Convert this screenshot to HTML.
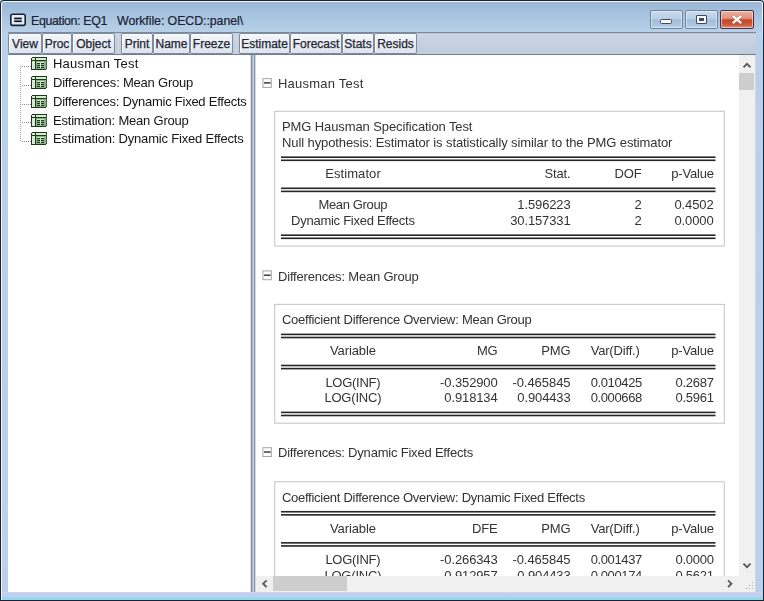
<!DOCTYPE html>
<html><head><meta charset="utf-8">
<style>
*{margin:0;padding:0;box-sizing:border-box}
html,body{width:764px;height:601px;overflow:hidden;background:#c9d6e6}
body{position:relative;font-family:"Liberation Sans",sans-serif;}
.a{position:absolute}
#frame{left:0;top:0;width:764px;height:601px;background:#1c2330;border-radius:4px 4px 0 0}
#frame2{left:1px;top:1px;width:762px;height:599px;border-radius:3px 3px 0 0;background:#f2f7fc}
#frame3{left:2px;top:2px;width:760px;height:598px;border-radius:2px 2px 0 0;
 background:linear-gradient(to bottom,#a4b6c8 0px,#9bb9d6 1px,#a3c0dd 10px,#b3cce5 24px,#b9d0e9 31px,#bcd2ea 100%)}
#lowframe{left:2px;top:560px;width:760px;height:40px;background:linear-gradient(to bottom,#bcd1ea 0,#bccfea 32px,#cfe0ee 32px,#c4cdf0 33px,#c2cff0 36px,#a6d6ee 37px,#8cdaec 40px)}
#title,#title2{top:12px;font-size:12.4px;color:#1a2236;-webkit-text-stroke:0.2px #1a2236;white-space:pre;line-height:18px}
.wb{top:10px;height:19px;border:1px solid #71829a;border-radius:2px;
 background:linear-gradient(to bottom,#c8dbee 0,#b9cfe6 46%,#a3bcd6 52%,#adc6df 80%,#bcd3ea 100%);
 box-shadow:inset 0 0 0 1px rgba(235,244,252,0.6)}
#toolbar{left:8px;top:32px;width:748px;height:23px;background:linear-gradient(to bottom,#a8b6c8 0,#ccd7e5 1px,#c8d3e1 5px,#c1ccda 100%);border-top:1px solid #7a899c;border-bottom:1px solid #6f7d8f}
.btn{position:absolute;top:0px;height:21px;border:1px solid #7f8b9d;border-radius:2px;
 background:linear-gradient(to bottom,#f4f7fb 0,#e9eef6 45%,#dde4ee 100%);font-size:12px;color:#23252e;-webkit-text-stroke:0.25px #23252e;text-align:center;line-height:20px;
 box-shadow:inset 1px 1px 0 #fbfdff}
#client{left:8px;top:55px;width:748px;height:537px;background:#fff}
#split{left:250px;top:55px;width:6px;height:537px;background:linear-gradient(to right,#dde0f2 0,#dde0f2 1px,#8890a8 1px,#8890a8 2px,#aab6ca 2px,#aab6ca 3px,#c2cee0 3px,#c2cee0 4px,#8c9cac 4px,#8c9cac 5px,#cad8e2 5px,#cad8e2 6px)}
#split2{display:none}
.ti{position:absolute;will-change:transform;left:53px;font-size:13px;color:#141414;white-space:pre;line-height:15px}
.ic{position:absolute;left:31px}
.txt{position:absolute;will-change:transform;font-size:13px;color:#333;white-space:pre;line-height:15px}
#vs{left:739px;top:55px;width:16px;height:521px;background:#f0f0f0}
#hs{left:256px;top:576px;width:483px;height:16px;background:#f0f0f0}
#corner{left:739px;top:576px;width:16px;height:16px;background:#f0f0f0}
</style></head><body>
<div id="frame" class="a"></div>
<div id="frame2" class="a"></div>
<div id="frame3" class="a"></div>
<div id="lowframe" class="a"></div>
<div class="a" style="left:762px;top:14px;width:1px;height:586px;background:linear-gradient(to bottom,#f2f7fc 0,#b4d8ea 30px,#a8d8e8 100%)"></div>

<!-- title icon -->
<svg class="a" style="left:9px;top:13px" width="18" height="14" viewBox="0 0 18 14">
 <rect x="1.8" y="1.2" width="14.4" height="11.2" rx="1.8" fill="#e4ecf6" stroke="#18223a" stroke-width="1.6"/>
 <rect x="5.2" y="4.6" width="7.6" height="1.7" fill="#0c1424"/>
 <rect x="5.2" y="7.4" width="7.6" height="1.7" fill="#0c1424"/>
</svg>
<div id="title" class="a" style="left:31px;letter-spacing:-0.35px">Equation: EQ1</div><div id="title2" class="a" style="left:117px;letter-spacing:-0.08px">Workfile: OECD::panel\</div>

<!-- window buttons -->
<div class="a wb" style="left:650px;width:33px"></div>
<div class="a" style="left:660px;top:19px;width:12px;height:5px;background:#fbfcfd;border:1px solid #3e4a5c;border-radius:1.5px"></div>
<div class="a wb" style="left:685px;width:33px"></div>
<div class="a" style="left:696px;top:15px;width:11px;height:9px;background:#fbfcfd;border:1px solid #3e4a5c;border-radius:1px"></div>
<div class="a" style="left:699px;top:18px;width:5px;height:3px;background:#3e4a5c"></div>
<div class="a wb" style="left:720px;width:34px;border-color:#4a2c3a;background:linear-gradient(to bottom,#eab0a0 0,#e49480 40%,#d8775e 48%,#c4442a 52%,#cc5a3e 80%,#e08a70 100%)"></div>
<svg class="a" style="left:729px;top:13px" width="16" height="13" viewBox="0 0 16 13">
 <path d="M4.5 3.5 L11.5 9.5 M11.5 3.5 L4.5 9.5" stroke="#7a3a30" stroke-width="3.6" stroke-linecap="square" opacity="0.3"/>
 <path d="M4.6 3.6 L11.4 9.4 M11.4 3.6 L4.6 9.4" stroke="#fff" stroke-width="2.3" stroke-linecap="square"/>
</svg>

<!-- toolbar -->
<div id="toolbar" class="a">
 <div class="btn" style="left:0px;width:34px">View</div>
 <div class="btn" style="left:34px;width:30px">Proc</div>
 <div class="btn" style="left:64px;width:43px">Object</div>
 <div class="a" style="left:110px;top:0;width:1px;height:21px;background:#d2dae5"></div>
 <div class="btn" style="left:113px;width:32px">Print</div>
 <div class="btn" style="left:145px;width:37px">Name</div>
 <div class="btn" style="left:182px;width:43px">Freeze</div>
 <div class="a" style="left:228px;top:0;width:1px;height:21px;background:#d2dae5"></div>
 <div class="btn" style="left:231px;width:51px">Estimate</div>
 <div class="btn" style="left:282px;width:52px">Forecast</div>
 <div class="btn" style="left:334px;width:32px">Stats</div>
 <div class="btn" style="left:366px;width:43px">Resids</div>
</div>

<div id="client" class="a"></div>
<div id="split" class="a"></div>
<div id="split2" class="a"></div>

<!-- tree -->
<svg class="a" style="left:0;top:0" width="40" height="160" viewBox="0 0 40 160"><g fill="#8c8c8c"><rect x="22" y="66" width="1" height="1"/><rect x="24" y="66" width="1" height="1"/><rect x="26" y="66" width="1" height="1"/><rect x="28" y="66" width="1" height="1"/><rect x="30" y="66" width="1" height="1"/><rect x="22" y="85" width="1" height="1"/><rect x="24" y="85" width="1" height="1"/><rect x="26" y="85" width="1" height="1"/><rect x="28" y="85" width="1" height="1"/><rect x="30" y="85" width="1" height="1"/><rect x="22" y="104" width="1" height="1"/><rect x="24" y="104" width="1" height="1"/><rect x="26" y="104" width="1" height="1"/><rect x="28" y="104" width="1" height="1"/><rect x="30" y="104" width="1" height="1"/><rect x="22" y="122" width="1" height="1"/><rect x="24" y="122" width="1" height="1"/><rect x="26" y="122" width="1" height="1"/><rect x="28" y="122" width="1" height="1"/><rect x="30" y="122" width="1" height="1"/><rect x="22" y="141" width="1" height="1"/><rect x="24" y="141" width="1" height="1"/><rect x="26" y="141" width="1" height="1"/><rect x="28" y="141" width="1" height="1"/><rect x="30" y="141" width="1" height="1"/></g><g fill="#a6a6a6"><rect x="20" y="66" width="1" height="1"/><rect x="20" y="68" width="1" height="1"/><rect x="20" y="70" width="1" height="1"/><rect x="20" y="72" width="1" height="1"/><rect x="20" y="74" width="1" height="1"/><rect x="20" y="76" width="1" height="1"/><rect x="20" y="78" width="1" height="1"/><rect x="20" y="80" width="1" height="1"/><rect x="20" y="82" width="1" height="1"/><rect x="20" y="84" width="1" height="1"/><rect x="20" y="86" width="1" height="1"/><rect x="20" y="88" width="1" height="1"/><rect x="20" y="90" width="1" height="1"/><rect x="20" y="92" width="1" height="1"/><rect x="20" y="94" width="1" height="1"/><rect x="20" y="96" width="1" height="1"/><rect x="20" y="98" width="1" height="1"/><rect x="20" y="100" width="1" height="1"/><rect x="20" y="102" width="1" height="1"/><rect x="20" y="104" width="1" height="1"/><rect x="20" y="106" width="1" height="1"/><rect x="20" y="108" width="1" height="1"/><rect x="20" y="110" width="1" height="1"/><rect x="20" y="112" width="1" height="1"/><rect x="20" y="114" width="1" height="1"/><rect x="20" y="116" width="1" height="1"/><rect x="20" y="118" width="1" height="1"/><rect x="20" y="120" width="1" height="1"/><rect x="20" y="122" width="1" height="1"/><rect x="20" y="124" width="1" height="1"/><rect x="20" y="126" width="1" height="1"/><rect x="20" y="128" width="1" height="1"/><rect x="20" y="130" width="1" height="1"/><rect x="20" y="132" width="1" height="1"/><rect x="20" y="134" width="1" height="1"/><rect x="20" y="136" width="1" height="1"/><rect x="20" y="138" width="1" height="1"/><rect x="20" y="140" width="1" height="1"/></g></svg>
<svg class="a" style="left:31px;top:57px" width="16" height="13" viewBox="0 0 16 13" shape-rendering="crispEdges"><rect x="0" y="0" width="16" height="13" rx="2" fill="#1e381e"/><rect x="1" y="1" width="3" height="11" fill="#d3efcd"/><rect x="5" y="1" width="10" height="2" fill="#d3efcd"/><rect x="5" y="4" width="10" height="8" fill="#8fae8b"/><rect x="15" y="2" width="1" height="9" fill="#4a644a"/><rect x="1" y="3" width="3" height="1" fill="#1e381e"/><g fill="#1f3a1f"><rect x="6" y="6" width="3" height="1"/><rect x="6" y="8" width="3" height="1"/><rect x="6" y="10" width="3" height="1"/><rect x="10" y="6" width="3" height="1"/><rect x="10" y="8" width="3" height="1"/><rect x="10" y="10" width="3" height="1"/></g><g fill="#cfe8ca"><rect x="6" y="5" width="7" height="1"/><rect x="9" y="5" width="1" height="6"/></g></svg>
<div class="ti" style="top:56.10px;letter-spacing:0.220px">Hausman Test</div>
<svg class="a" style="left:31px;top:76px" width="16" height="13" viewBox="0 0 16 13" shape-rendering="crispEdges"><rect x="0" y="0" width="16" height="13" rx="2" fill="#1e381e"/><rect x="1" y="1" width="3" height="11" fill="#d3efcd"/><rect x="5" y="1" width="10" height="2" fill="#d3efcd"/><rect x="5" y="4" width="10" height="8" fill="#8fae8b"/><rect x="15" y="2" width="1" height="9" fill="#4a644a"/><rect x="1" y="3" width="3" height="1" fill="#1e381e"/><g fill="#1f3a1f"><rect x="6" y="6" width="3" height="1"/><rect x="6" y="8" width="3" height="1"/><rect x="6" y="10" width="3" height="1"/><rect x="10" y="6" width="3" height="1"/><rect x="10" y="8" width="3" height="1"/><rect x="10" y="10" width="3" height="1"/></g><g fill="#cfe8ca"><rect x="6" y="5" width="7" height="1"/><rect x="9" y="5" width="1" height="6"/></g></svg>
<div class="ti" style="top:74.90px;letter-spacing:-0.215px">Differences: Mean Group</div>
<svg class="a" style="left:31px;top:95px" width="16" height="13" viewBox="0 0 16 13" shape-rendering="crispEdges"><rect x="0" y="0" width="16" height="13" rx="2" fill="#1e381e"/><rect x="1" y="1" width="3" height="11" fill="#d3efcd"/><rect x="5" y="1" width="10" height="2" fill="#d3efcd"/><rect x="5" y="4" width="10" height="8" fill="#8fae8b"/><rect x="15" y="2" width="1" height="9" fill="#4a644a"/><rect x="1" y="3" width="3" height="1" fill="#1e381e"/><g fill="#1f3a1f"><rect x="6" y="6" width="3" height="1"/><rect x="6" y="8" width="3" height="1"/><rect x="6" y="10" width="3" height="1"/><rect x="10" y="6" width="3" height="1"/><rect x="10" y="8" width="3" height="1"/><rect x="10" y="10" width="3" height="1"/></g><g fill="#cfe8ca"><rect x="6" y="5" width="7" height="1"/><rect x="9" y="5" width="1" height="6"/></g></svg>
<div class="ti" style="top:93.70px;letter-spacing:-0.244px">Differences: Dynamic Fixed Effects</div>
<svg class="a" style="left:31px;top:114px" width="16" height="13" viewBox="0 0 16 13" shape-rendering="crispEdges"><rect x="0" y="0" width="16" height="13" rx="2" fill="#1e381e"/><rect x="1" y="1" width="3" height="11" fill="#d3efcd"/><rect x="5" y="1" width="10" height="2" fill="#d3efcd"/><rect x="5" y="4" width="10" height="8" fill="#8fae8b"/><rect x="15" y="2" width="1" height="9" fill="#4a644a"/><rect x="1" y="3" width="3" height="1" fill="#1e381e"/><g fill="#1f3a1f"><rect x="6" y="6" width="3" height="1"/><rect x="6" y="8" width="3" height="1"/><rect x="6" y="10" width="3" height="1"/><rect x="10" y="6" width="3" height="1"/><rect x="10" y="8" width="3" height="1"/><rect x="10" y="10" width="3" height="1"/></g><g fill="#cfe8ca"><rect x="6" y="5" width="7" height="1"/><rect x="9" y="5" width="1" height="6"/></g></svg>
<div class="ti" style="top:112.50px;letter-spacing:-0.210px">Estimation: Mean Group</div>
<svg class="a" style="left:31px;top:132px" width="16" height="13" viewBox="0 0 16 13" shape-rendering="crispEdges"><rect x="0" y="0" width="16" height="13" rx="2" fill="#1e381e"/><rect x="1" y="1" width="3" height="11" fill="#d3efcd"/><rect x="5" y="1" width="10" height="2" fill="#d3efcd"/><rect x="5" y="4" width="10" height="8" fill="#8fae8b"/><rect x="15" y="2" width="1" height="9" fill="#4a644a"/><rect x="1" y="3" width="3" height="1" fill="#1e381e"/><g fill="#1f3a1f"><rect x="6" y="6" width="3" height="1"/><rect x="6" y="8" width="3" height="1"/><rect x="6" y="10" width="3" height="1"/><rect x="10" y="6" width="3" height="1"/><rect x="10" y="8" width="3" height="1"/><rect x="10" y="10" width="3" height="1"/></g><g fill="#cfe8ca"><rect x="6" y="5" width="7" height="1"/><rect x="9" y="5" width="1" height="6"/></g></svg>
<div class="ti" style="top:131.30px;letter-spacing:-0.194px">Estimation: Dynamic Fixed Effects</div>

<div style="position:absolute;left:0;top:0;width:764px;height:601px;clip-path:inset(55px 25px 25px 256px)">
<svg class="a" style="left:0;top:0" width="764" height="601" viewBox="0 0 764 601"><rect x="262.9" y="78.60" width="8.4" height="8.8" fill="#fff" stroke="#a4a4a4" stroke-width="1"/><rect x="264.00" y="82.15" width="6.60" height="1.50" fill="#404040"/><rect x="274.7" y="111.30" width="449.6" height="134.70" fill="none" stroke="#c9c9c9" stroke-width="1.1"/><rect x="281.00" y="156.40" width="434.50" height="1.60" fill="#262626"/><rect x="281.00" y="159.50" width="434.50" height="1.60" fill="#262626"/><rect x="281.00" y="187.50" width="434.50" height="1.60" fill="#262626"/><rect x="281.00" y="190.60" width="434.50" height="1.60" fill="#262626"/><rect x="281.00" y="234.40" width="434.50" height="1.60" fill="#262626"/><rect x="281.00" y="237.50" width="434.50" height="1.60" fill="#262626"/><rect x="262.9" y="270.90" width="8.4" height="8.8" fill="#fff" stroke="#a4a4a4" stroke-width="1"/><rect x="264.00" y="274.45" width="6.60" height="1.50" fill="#404040"/><rect x="274.7" y="304.40" width="449.6" height="118.80" fill="none" stroke="#c9c9c9" stroke-width="1.1"/><rect x="281.00" y="333.60" width="434.50" height="1.60" fill="#262626"/><rect x="281.00" y="336.70" width="434.50" height="1.60" fill="#262626"/><rect x="281.00" y="364.70" width="434.50" height="1.60" fill="#262626"/><rect x="281.00" y="367.80" width="434.50" height="1.60" fill="#262626"/><rect x="281.00" y="411.60" width="434.50" height="1.60" fill="#262626"/><rect x="281.00" y="414.70" width="434.50" height="1.60" fill="#262626"/><rect x="262.9" y="447.70" width="8.4" height="8.8" fill="#fff" stroke="#a4a4a4" stroke-width="1"/><rect x="264.00" y="451.25" width="6.60" height="1.50" fill="#404040"/><rect x="274.7" y="481.75" width="449.6" height="118.80" fill="none" stroke="#c9c9c9" stroke-width="1.1"/><rect x="281.00" y="510.95" width="434.50" height="1.60" fill="#262626"/><rect x="281.00" y="514.05" width="434.50" height="1.60" fill="#262626"/><rect x="281.00" y="542.05" width="434.50" height="1.60" fill="#262626"/><rect x="281.00" y="545.15" width="434.50" height="1.60" fill="#262626"/><rect x="281.00" y="588.95" width="434.50" height="1.60" fill="#262626"/><rect x="281.00" y="592.05" width="434.50" height="1.60" fill="#262626"/></svg>
<div class="txt" style="left:277.60px;top:76.20px;letter-spacing:0.220px;color:#333333;">Hausman Test</div>
<div class="txt" style="left:282.00px;top:119.10px;letter-spacing:-0.101px;color:#333333;">PMG Hausman Specification Test</div>
<div class="txt" style="left:282.00px;top:135.00px;letter-spacing:-0.097px;color:#333333;">Null hypothesis: Estimator is statistically similar to the PMG estimator</div>
<div class="txt" style="left:203.00px;width:300.07px;top:166.10px;letter-spacing:0.074px;text-align:center;color:#333333;">Estimator</div>
<div class="txt" style="left:269.50px;width:300.61px;top:166.10px;letter-spacing:-0.110px;text-align:right;color:#333333;">Stat.</div>
<div class="txt" style="left:341.40px;width:300.61px;top:166.10px;letter-spacing:-0.110px;text-align:right;color:#333333;">DOF</div>
<div class="txt" style="left:413.40px;width:300.71px;top:166.10px;letter-spacing:-0.210px;text-align:right;color:#333333;">p-Value</div>
<div class="txt" style="left:203.00px;width:299.65px;top:197.30px;letter-spacing:-0.353px;text-align:center;color:#333333;">Mean Group</div>
<div class="txt" style="left:269.50px;width:300.61px;top:197.30px;letter-spacing:-0.110px;text-align:right;color:#333333;">1.596223</div>
<div class="txt" style="left:341.40px;width:300.61px;top:197.30px;letter-spacing:-0.110px;text-align:right;color:#333333;">2</div>
<div class="txt" style="left:413.40px;width:300.61px;top:197.30px;letter-spacing:-0.110px;text-align:right;color:#333333;">0.4502</div>
<div class="txt" style="left:203.00px;width:299.74px;top:213.15px;letter-spacing:-0.265px;text-align:center;color:#333333;">Dynamic Fixed Effects</div>
<div class="txt" style="left:269.50px;width:300.61px;top:213.15px;letter-spacing:-0.110px;text-align:right;color:#333333;">30.157331</div>
<div class="txt" style="left:341.40px;width:300.61px;top:213.15px;letter-spacing:-0.110px;text-align:right;color:#333333;">2</div>
<div class="txt" style="left:413.40px;width:300.61px;top:213.15px;letter-spacing:-0.110px;text-align:right;color:#333333;">0.0000</div>
<div class="txt" style="left:277.60px;top:268.50px;letter-spacing:-0.192px;color:#333333;">Differences: Mean Group</div>
<div class="txt" style="left:282.00px;top:312.20px;letter-spacing:-0.270px;color:#333333;">Coefficient Difference Overview: Mean Group</div>
<div class="txt" style="left:203.00px;width:299.91px;top:343.30px;letter-spacing:-0.093px;text-align:center;color:#333333;">Variable</div>
<div class="txt" style="left:196.70px;width:300.61px;top:343.30px;letter-spacing:-0.110px;text-align:right;color:#333333;">MG</div>
<div class="txt" style="left:269.50px;width:300.61px;top:343.30px;letter-spacing:-0.110px;text-align:right;color:#333333;">PMG</div>
<div class="txt" style="left:339.20px;width:300.68px;top:343.30px;letter-spacing:-0.177px;text-align:right;color:#333333;">Var(Diff.)</div>
<div class="txt" style="left:413.40px;width:300.71px;top:343.30px;letter-spacing:-0.210px;text-align:right;color:#333333;">p-Value</div>
<div class="txt" style="left:203.00px;width:299.74px;top:374.50px;letter-spacing:-0.264px;text-align:center;color:#333333;">LOG(INF)</div>
<div class="txt" style="left:196.70px;width:300.61px;top:374.50px;letter-spacing:-0.110px;text-align:right;color:#333333;">-0.352900</div>
<div class="txt" style="left:269.50px;width:300.55px;top:374.50px;letter-spacing:-0.047px;text-align:right;color:#333333;">-0.465845</div>
<div class="txt" style="left:341.40px;width:300.88px;top:374.50px;letter-spacing:-0.379px;text-align:right;color:#333333;">0.010425</div>
<div class="txt" style="left:413.40px;width:300.76px;top:374.50px;letter-spacing:-0.256px;text-align:right;color:#333333;">0.2687</div>
<div class="txt" style="left:203.00px;width:299.81px;top:390.35px;letter-spacing:-0.186px;text-align:center;color:#333333;">LOG(INC)</div>
<div class="txt" style="left:196.70px;width:300.61px;top:390.35px;letter-spacing:-0.110px;text-align:right;color:#333333;">0.918134</div>
<div class="txt" style="left:269.50px;width:300.61px;top:390.35px;letter-spacing:-0.110px;text-align:right;color:#333333;">0.904433</div>
<div class="txt" style="left:341.40px;width:300.88px;top:390.35px;letter-spacing:-0.379px;text-align:right;color:#333333;">0.000668</div>
<div class="txt" style="left:413.40px;width:300.76px;top:390.35px;letter-spacing:-0.256px;text-align:right;color:#333333;">0.5961</div>
<div class="txt" style="left:277.60px;top:445.30px;letter-spacing:-0.201px;color:#333333;">Differences: Dynamic Fixed Effects</div>
<div class="txt" style="left:282.00px;top:489.55px;letter-spacing:-0.278px;color:#333333;">Coefficient Difference Overview: Dynamic Fixed Effects</div>
<div class="txt" style="left:203.00px;width:299.91px;top:520.65px;letter-spacing:-0.093px;text-align:center;color:#333333;">Variable</div>
<div class="txt" style="left:196.70px;width:300.61px;top:520.65px;letter-spacing:-0.110px;text-align:right;color:#333333;">DFE</div>
<div class="txt" style="left:269.50px;width:300.61px;top:520.65px;letter-spacing:-0.110px;text-align:right;color:#333333;">PMG</div>
<div class="txt" style="left:339.20px;width:300.68px;top:520.65px;letter-spacing:-0.177px;text-align:right;color:#333333;">Var(Diff.)</div>
<div class="txt" style="left:413.40px;width:300.71px;top:520.65px;letter-spacing:-0.210px;text-align:right;color:#333333;">p-Value</div>
<div class="txt" style="left:203.00px;width:299.74px;top:551.85px;letter-spacing:-0.264px;text-align:center;color:#333333;">LOG(INF)</div>
<div class="txt" style="left:196.70px;width:300.61px;top:551.85px;letter-spacing:-0.110px;text-align:right;color:#333333;">-0.266343</div>
<div class="txt" style="left:269.50px;width:300.55px;top:551.85px;letter-spacing:-0.047px;text-align:right;color:#333333;">-0.465845</div>
<div class="txt" style="left:341.40px;width:300.88px;top:551.85px;letter-spacing:-0.379px;text-align:right;color:#333333;">0.001437</div>
<div class="txt" style="left:413.40px;width:300.76px;top:551.85px;letter-spacing:-0.256px;text-align:right;color:#333333;">0.0000</div>
<div class="txt" style="left:203.00px;width:299.81px;top:567.70px;letter-spacing:-0.186px;text-align:center;color:#333333;">LOG(INC)</div>
<div class="txt" style="left:196.70px;width:300.61px;top:567.70px;letter-spacing:-0.110px;text-align:right;color:#333333;">0.912957</div>
<div class="txt" style="left:269.50px;width:300.61px;top:567.70px;letter-spacing:-0.110px;text-align:right;color:#333333;">0.904433</div>
<div class="txt" style="left:341.40px;width:300.88px;top:567.70px;letter-spacing:-0.379px;text-align:right;color:#333333;">0.000174</div>
<div class="txt" style="left:413.40px;width:300.76px;top:567.70px;letter-spacing:-0.256px;text-align:right;color:#333333;">0.5621</div>
</div>

<!-- scrollbars -->
<div id="hs" class="a"></div>
<div id="vs" class="a"></div>
<div id="corner" class="a"></div>
<div class="a" style="left:755px;top:55px;width:1px;height:537px;background:#ccd6e4"></div>
<div class="a" style="left:739px;top:73px;width:15px;height:17px;background:#cdcdcd"></div>
<div class="a" style="left:273px;top:576px;width:74px;height:15px;background:#cdcdcd"></div>
<svg class="a" style="left:0;top:0" width="764" height="601" viewBox="0 0 764 601"><g fill="none" stroke="#5a5a5a" stroke-width="1.9" stroke-linecap="butt" stroke-linejoin="miter"><path d="M743.5 67.3 L747 63.8 L750.5 67.3"/><path d="M743.5 563.7 L747 567.2 L750.5 563.7"/><path d="M266.6 580.3 L263.2 583.7 L266.6 587.1"/><path d="M728 580.3 L731.4 583.7 L728 587.1"/></g><g fill="#a8a8a8"><rect x="752" y="582" width="1" height="1"/><rect x="752" y="585" width="1" height="1"/><rect x="752" y="588" width="1" height="1"/><rect x="749" y="585" width="1" height="1"/><rect x="749" y="588" width="1" height="1"/><rect x="746" y="588" width="1" height="1"/></g></svg>
</body></html>
